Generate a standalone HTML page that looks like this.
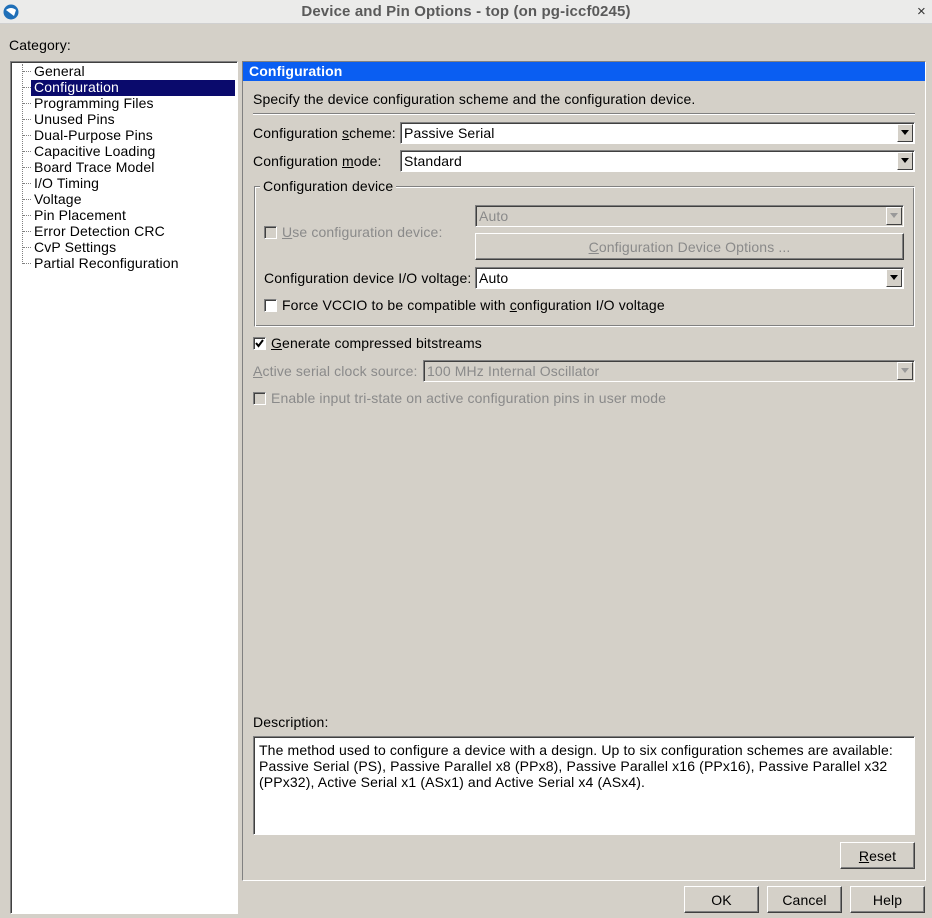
<!DOCTYPE html>
<html><head><meta charset="utf-8"><style>
*{box-sizing:border-box;margin:0;padding:0}
body{width:932px;height:918px;background:#d4d0c8;font-family:"Liberation Sans",sans-serif;font-size:14px;letter-spacing:0.13px;color:#000;position:relative;overflow:hidden}
.a{position:absolute;white-space:nowrap}
.sunk{border:1px solid;border-color:#808080 #fff #fff #808080;box-shadow:inset 1px 1px 0 #404040}
.combo{position:absolute;background:#fff;border:1px solid;border-color:#808080 #fff #fff #808080;box-shadow:inset 1px 1px 0 #404040;padding-left:3px;padding-top:1px;line-height:18px}
.combo.dis{background:#d4d0c8;color:#8a8a8a}
.arr{position:absolute;right:1px;top:1px;bottom:1px;width:16px;background:#d4d0c8;border:1px solid;border-color:#fff #404040 #404040 #fff}
.arr svg{position:absolute;left:3px;top:5px}
.btn{position:absolute;background:#d4d0c8;border:1px solid;border-color:#fff #404040 #404040 #fff;box-shadow:inset -1px -1px 0 #808080;text-align:center}
.cb{position:absolute;width:13px;height:13px;background:#fff;border:1px solid;border-color:#808080 #fff #fff #808080;box-shadow:inset 1px 1px 0 #404040}
.cb.dis{background:#d4d0c8}
.g{color:#8a8a8a}
u{text-decoration:underline}
</style></head><body>
<div class="a" style="left:0;top:0;width:932px;height:24px;background:#ebebea;border-bottom:1px solid #d0d0d0"></div>
<svg class="a" style="left:3px;top:4px" width="16" height="16" viewBox="0 0 16 16"><circle cx="8" cy="8" r="7.5" fill="#1f6fb8"/><path d="M3 6 Q8 2 13 6 L11 12 Q7 9 3 6Z" fill="#fff"/></svg>
<div class="a" style="left:0;top:3px;width:932px;text-align:center;font-weight:bold;font-size:15px;color:#5a5a5a">Device and Pin Options - top (on pg-iccf0245)</div>
<div class="a" style="left:917px;top:3px;font-size:15px;color:#333">×</div>

<div class="a" style="left:9px;top:37px">Category:</div>
<div class="a sunk" style="left:10px;top:61px;width:228px;height:853px;background:#fff"></div>
<div class="a" style="left:22px;top:64px;width:1px;height:200px;border-left:1px dotted #808080"></div>
<div class="a" style="left:31px;top:80px;width:204px;height:16px;background:#0a0a6c"></div>
<div class="a" style="left:34px;top:63px;line-height:16px">
<div>General</div><div style="color:#fff">Configuration</div><div>Programming Files</div><div>Unused Pins</div><div>Dual-Purpose Pins</div><div>Capacitive Loading</div><div>Board Trace Model</div><div>I/O Timing</div><div>Voltage</div><div>Pin Placement</div><div>Error Detection CRC</div><div>CvP Settings</div><div>Partial Reconfiguration</div></div>
<div class="a" style="left:23px;top:71px">
<div style="position:absolute;top:0;width:8px;border-top:1px dotted #808080"></div>
<div style="position:absolute;top:16px;width:8px;border-top:1px dotted #808080"></div>
<div style="position:absolute;top:32px;width:8px;border-top:1px dotted #808080"></div>
<div style="position:absolute;top:48px;width:8px;border-top:1px dotted #808080"></div>
<div style="position:absolute;top:64px;width:8px;border-top:1px dotted #808080"></div>
<div style="position:absolute;top:80px;width:8px;border-top:1px dotted #808080"></div>
<div style="position:absolute;top:96px;width:8px;border-top:1px dotted #808080"></div>
<div style="position:absolute;top:112px;width:8px;border-top:1px dotted #808080"></div>
<div style="position:absolute;top:128px;width:8px;border-top:1px dotted #808080"></div>
<div style="position:absolute;top:144px;width:8px;border-top:1px dotted #808080"></div>
<div style="position:absolute;top:160px;width:8px;border-top:1px dotted #808080"></div>
<div style="position:absolute;top:176px;width:8px;border-top:1px dotted #808080"></div>
<div style="position:absolute;top:192px;width:8px;border-top:1px dotted #808080"></div>
</div>

<div class="a" style="left:242px;top:61px;width:684px;height:820px;border:1px solid;border-color:#808080 #fff #fff #808080"></div>
<div class="a" style="left:243px;top:62px;width:682px;height:19px;background:#0a5ef2;color:#fff;font-weight:bold;padding-left:6px;line-height:19px">Configuration</div>
<div class="a" style="left:253px;top:91px">Specify the device configuration scheme and the configuration device.</div>
<div class="a" style="left:253px;top:113px;width:662px;height:2px;border-top:1px solid #808080;border-bottom:1px solid #fff"></div>

<div class="a" style="left:253px;top:125px">Configuration <u>s</u>cheme:</div>
<div class="combo" style="left:400px;top:122px;width:515px;height:22px">Passive Serial<div class="arr"><svg width="8" height="5"><path d="M0 0H8L4 5Z"/></svg></div></div>
<div class="a" style="left:253px;top:153px">Configuration <u>m</u>ode:</div>
<div class="combo" style="left:400px;top:150px;width:515px;height:22px">Standard<div class="arr"><svg width="8" height="5"><path d="M0 0H8L4 5Z"/></svg></div></div>

<div class="a" style="left:254px;top:186px;width:661px;height:141px;border:1px solid;border-color:#808080 #fff #fff #808080;box-shadow:1px 1px 0 #fff inset, -1px -1px 0 #808080 inset"></div>
<div class="a" style="left:260px;top:178px;background:#d4d0c8;padding:0 3px">Configuration device</div>
<div class="cb dis" style="left:264px;top:226px"></div>
<div class="a g" style="left:282px;top:224px"><u>U</u>se configuration device:</div>
<div class="combo dis" style="left:475px;top:205px;width:429px;height:22px">Auto<div class="arr"><svg width="8" height="5"><path d="M0 0H8L4 5Z" fill="#999"/></svg></div></div>
<div class="btn g" style="left:475px;top:233px;width:429px;height:27px;line-height:26px"><u>C</u>onfiguration Device Options ...</div>
<div class="a" style="left:264px;top:270px">Configuration device I/O voltage:</div>
<div class="combo" style="left:475px;top:267px;width:429px;height:22px">Auto<div class="arr"><svg width="8" height="5"><path d="M0 0H8L4 5Z"/></svg></div></div>
<div class="cb" style="left:264px;top:299px"></div>
<div class="a" style="left:282px;top:297px">Force VCCIO to be compatible with <u>c</u>onfiguration I/O voltage</div>

<div class="cb" style="left:253px;top:337px"><svg style="position:absolute;left:1px;top:1px" width="9" height="9"><path d="M1 4L3.5 7L8 1" stroke="#000" stroke-width="2" fill="none"/></svg></div>
<div class="a" style="left:271px;top:335px"><u>G</u>enerate compressed bitstreams</div>
<div class="a g" style="left:253px;top:363px"><u>A</u>ctive serial clock source:</div>
<div class="combo dis" style="left:423px;top:360px;width:492px;height:22px">100 MHz Internal Oscillator<div class="arr"><svg width="8" height="5"><path d="M0 0H8L4 5Z" fill="#999"/></svg></div></div>
<div class="cb dis" style="left:253px;top:392px"></div>
<div class="a g" style="left:271px;top:390px">Enable input tri-state on active configuration pins in user mode</div>

<div class="a" style="left:253px;top:714px">Description:</div>
<div class="a sunk" style="left:253px;top:736px;width:662px;height:99px;background:#fff"></div>
<div class="a" style="left:259px;top:742px;line-height:16px;white-space:normal;width:654px">The method used to configure a device with a design. Up to six configuration schemes are available: Passive Serial (PS), Passive Parallel x8 (PPx8), Passive Parallel x16 (PPx16), Passive Parallel x32 (PPx32), Active Serial x1 (ASx1) and Active Serial x4 (ASx4).</div>
<div class="btn" style="left:840px;top:842px;width:75px;height:27px;line-height:26px"><u>R</u>eset</div>

<div class="btn" style="left:684px;top:886px;width:75px;height:27px;line-height:26px">OK</div>
<div class="btn" style="left:767px;top:886px;width:75px;height:27px;line-height:26px">Cancel</div>
<div class="btn" style="left:850px;top:886px;width:75px;height:27px;line-height:26px">Help</div>
</body></html>
